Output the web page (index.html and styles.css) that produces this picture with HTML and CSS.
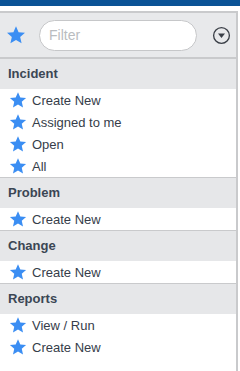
FILE: index.html
```html
<!DOCTYPE html>
<html>
<head>
<meta charset="utf-8">
<link rel="stylesheet" href="styles.css">
</head>
<body>
<div class="topbar"></div>
<div class="panel">
  <div class="toolbar">
    <svg class="star star-lg" viewBox="0 0 24 24"><polygon points="12,1.5 15.1,8.6 22.8,9.3 17,14.4 18.7,22 12,18 5.3,22 7,14.4 1.2,9.3 8.9,8.6"/></svg>
    <div class="filter">Filter</div>
    <svg class="dd" viewBox="0 0 20 20"><circle cx="10" cy="10" r="8.3" fill="none" stroke="#3a3f47" stroke-width="1.4"/><polygon points="6.3,8 13.7,8 10,12.6" fill="#3a3f47"/></svg>
  </div>
  <div class="section">
    <div class="shead">Incident</div>
    <ul class="items">
      <li><svg class="star" viewBox="0 0 24 24"><polygon points="12,1.5 15.1,8.6 22.8,9.3 17,14.4 18.7,22 12,18 5.3,22 7,14.4 1.2,9.3 8.9,8.6"/></svg>Create New</li>
      <li><svg class="star" viewBox="0 0 24 24"><polygon points="12,1.5 15.1,8.6 22.8,9.3 17,14.4 18.7,22 12,18 5.3,22 7,14.4 1.2,9.3 8.9,8.6"/></svg>Assigned to me</li>
      <li><svg class="star" viewBox="0 0 24 24"><polygon points="12,1.5 15.1,8.6 22.8,9.3 17,14.4 18.7,22 12,18 5.3,22 7,14.4 1.2,9.3 8.9,8.6"/></svg>Open</li>
      <li><svg class="star" viewBox="0 0 24 24"><polygon points="12,1.5 15.1,8.6 22.8,9.3 17,14.4 18.7,22 12,18 5.3,22 7,14.4 1.2,9.3 8.9,8.6"/></svg>All</li>
    </ul>
  </div>
  <div class="section">
    <div class="shead">Problem</div>
    <ul class="items">
      <li><svg class="star" viewBox="0 0 24 24"><polygon points="12,1.5 15.1,8.6 22.8,9.3 17,14.4 18.7,22 12,18 5.3,22 7,14.4 1.2,9.3 8.9,8.6"/></svg>Create New</li>
    </ul>
  </div>
  <div class="section">
    <div class="shead">Change</div>
    <ul class="items">
      <li><svg class="star" viewBox="0 0 24 24"><polygon points="12,1.5 15.1,8.6 22.8,9.3 17,14.4 18.7,22 12,18 5.3,22 7,14.4 1.2,9.3 8.9,8.6"/></svg>Create New</li>
    </ul>
  </div>
  <div class="section last">
    <div class="shead">Reports</div>
    <ul class="items">
      <li><svg class="star" viewBox="0 0 24 24"><polygon points="12,1.5 15.1,8.6 22.8,9.3 17,14.4 18.7,22 12,18 5.3,22 7,14.4 1.2,9.3 8.9,8.6"/></svg>View / Run</li>
      <li><svg class="star" viewBox="0 0 24 24"><polygon points="12,1.5 15.1,8.6 22.8,9.3 17,14.4 18.7,22 12,18 5.3,22 7,14.4 1.2,9.3 8.9,8.6"/></svg>Create New</li>
    </ul>
  </div>
</div>
</body>
</html>
```
FILE: styles.css
```css
html, body {
  margin: 0;
  padding: 0;
  background: #ffffff;
  font-family: "Liberation Sans", Arial, sans-serif;
}
.topbar {
  height: 6px;
  background: #0b5396;
}
.panel {
  margin-top: 5px;
  border-top: 2px solid #c9cacc;
  border-right: 2px solid #c9cacc;
  width: 238px;
  height: 360px;
  box-sizing: border-box;
}
.toolbar {
  display: flex;
  align-items: center;
  height: 44px;
  background: #e8e9eb;
  border-bottom: 2px solid #c9cacc;
  padding-left: 6px;
}
.star {
  fill: #3b8ef3;
  width: 18px;
  height: 18px;
  flex: none;
}
.star-lg {
  width: 20px;
  height: 20px;
}
.filter {
  margin-left: 13px;
  width: 158px;
  height: 31px;
  box-sizing: border-box;
  border: 1px solid #c6c7c9;
  border-radius: 16px;
  background: #ffffff;
  color: #b9bcc0;
  font-size: 14px;
  line-height: 29px;
  padding-left: 9px;
}
.dd {
  width: 19px;
  height: 19px;
  margin-left: 15px;
}
.section {
  border-bottom: 1px solid #c9cacc;
}
.section.last {
  border-bottom: none;
}
.shead {
  height: 30px;
  line-height: 30px;
  background: #e6e7e9;
  color: #3b4654;
  font-weight: bold;
  font-size: 13px;
  padding-left: 8px;
}
.items {
  list-style: none;
  margin: 0;
  padding: 0;
}
.items li {
  display: flex;
  align-items: center;
  height: 22px;
  padding-left: 9px;
  font-size: 13px;
  color: #363d4a;
}
.items li .star {
  margin-right: 5px;
}
```
